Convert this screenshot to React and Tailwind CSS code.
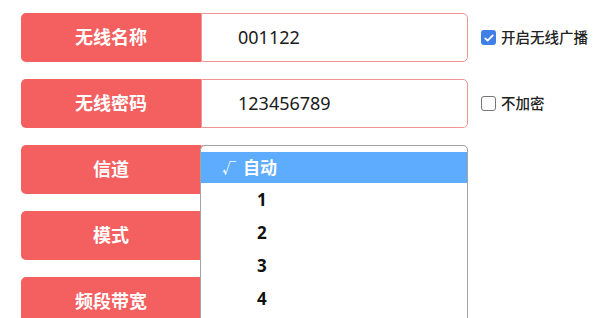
import { useState } from 'react';

const font = { fontFamily: '"Noto Sans", "Noto Sans CJK SC", sans-serif' };

function CheckBox({ checked, label }) {
  return (
    <label className="ml-[13px] flex items-center gap-[5px] text-[14.5px] font-medium text-[#222]">
      {checked ? (
        <span className="flex h-[15px] w-[15px] items-center justify-center rounded-[3px] bg-[#3f7fe6]">
          <svg viewBox="0 0 16 16" className="h-[12px] w-[12px]" fill="none">
            <path d="M3 8.5l3.2 3L13 4.5" stroke="white" strokeWidth="2.4" strokeLinecap="round" strokeLinejoin="round" />
          </svg>
        </span>
      ) : (
        <span className="h-[15px] w-[15px] rounded-[3px] border border-[#777] bg-white" />
      )}
      <span>{label}</span>
    </label>
  );
}

function Row({ label, value, extra }) {
  return (
    <div className="mb-[17px] flex h-[49px] items-center">
      <div className="flex h-full w-[180px] items-center justify-center rounded-l-[5px] bg-[#f45f5f] text-[18px] font-bold text-white">
        {label}
      </div>
      <div className="flex h-full w-[267px] items-center rounded-r-[5px] border border-[#ef9595] bg-white pl-[36px] text-[18px] text-[#1a1a1a]">
        {value}
      </div>
      {extra}
    </div>
  );
}

export default function App() {
  const [channel] = useState('自动');
  const options = ['自动', '1', '2', '3', '4'];

  return (
    <div className="relative h-[318px] w-[608px] overflow-hidden bg-white pl-[21px] pt-[13px]" style={font}>
      <Row label="无线名称" value="001122" extra={<CheckBox checked label="开启无线广播" />} />
      <Row label="无线密码" value="123456789" extra={<CheckBox label="不加密" />} />
      <Row label="信道" value="" />
      <Row label="模式" value="" />
      <Row label="频段带宽" value="" />

      {/* open channel dropdown */}
      <div className="absolute left-[200px] top-[145px] h-[200px] w-[268px] rounded-t-[5px] border border-[#a3a3a3] bg-white pt-[6px]">
        {options.map((opt) =>
          opt === channel ? (
            <div key={opt} className="flex h-[31px] items-center bg-[#5eacfd] text-white">
              <span className="ml-[21px] w-[21px] text-[14px] font-bold">√</span>
              <span className="text-[17px] font-bold">{opt}</span>
            </div>
          ) : (
            <div key={opt} className="flex h-[33px] items-center pl-[56px] text-[17px] font-bold text-[#111]">
              {opt}
            </div>
          )
        )}
      </div>
    </div>
  );
}
